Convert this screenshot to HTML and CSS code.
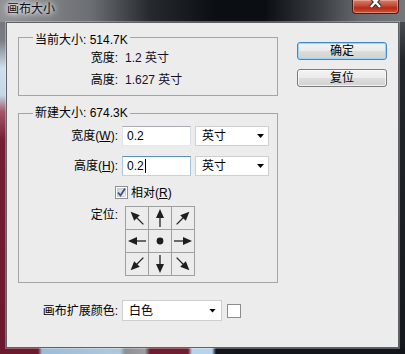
FILE: index.html
```html
<!DOCTYPE html>
<html lang="zh-CN">
<head>
    <meta charset="UTF-8">
    <meta name="viewport" content="width=device-width, initial-scale=1.0">
    <title>画布大小</title>
    <link rel="stylesheet" href="styles.css">
</head>
<body>
    <div class="window">
        <!-- TITLE BAR -->
        <header class="titlebar">
            <span class="titlebar__text">画布大小</span>
            <button class="titlebar__close" aria-label="关闭">
                <svg width="45" height="13" viewBox="0 0 45 13">
                    <path class="titlebar__x-outline" d="M18,-3 L27,7 M27,-3 L18,7"/>
                    <path class="titlebar__x" d="M18,-3 L27,7 M27,-3 L18,7"/>
                </svg>
            </button>
        </header>

        <div class="client">
            <div class="form">

                <!-- CURRENT SIZE -->
                <section class="group group--current">
                    <div class="group__title">当前大小: 514.7K</div>
                    <div class="info">
                        <span class="label">宽度:</span>
                        <span class="info__value">1.2 英寸</span>
                    </div>
                    <div class="info">
                        <span class="label">高度:</span>
                        <span class="info__value">1.627 英寸</span>
                    </div>
                </section>

                <!-- NEW SIZE -->
                <section class="group group--new">
                    <div class="group__title">新建大小: 674.3K</div>
                    <div class="field">
                        <span class="label">宽度(<u>W</u>):</span>
                        <span class="textbox">0.2</span>
                        <span class="combo combo--unit">英寸<span class="combo__arrow"></span></span>
                    </div>
                    <div class="field field--second">
                        <span class="label">高度(<u>H</u>):</span>
                        <span class="textbox textbox--focus">0.2<span class="caret"></span></span>
                        <span class="combo combo--unit">英寸<span class="combo__arrow"></span></span>
                    </div>
                    <label class="check">
                        <svg class="check__box" width="13" height="13" viewBox="0 0 13 13">
                            <defs>
                                <linearGradient id="boxfill" x1="0" y1="0" x2="1" y2="1">
                                    <stop offset="0" stop-color="#cbcfd5"/>
                                    <stop offset="1" stop-color="#f6f6f6"/>
                                </linearGradient>
                            </defs>
                            <rect x="0.5" y="0.5" width="12" height="12" fill="#fff" stroke="#8e8f8f"/>
                            <rect x="2.5" y="2.5" width="8" height="8" fill="url(#boxfill)" stroke="#b5b8bd" stroke-width="0.6"/>
                            <path d="M3,6.5 L5.5,9.5 L10,2.5" fill="none" stroke="#3b4f8c" stroke-width="1.8"/>
                        </svg>
                        <span>相对(<u>R</u>)</span>
                    </label>
                    <div class="anchor-row">
                        <span class="label label--top">定位:</span>
                        <div class="anchor">
                            <span class="anchor__cell"><svg viewBox="0 0 22 22"><g transform="rotate(-135 11 11)"><line x1="2" y1="11" x2="12" y2="11"/><polygon points="11,7 20,11 11,15"/></g></svg></span>
                            <span class="anchor__cell"><svg viewBox="0 0 22 22"><g transform="rotate(-90 11 11)"><line x1="2" y1="11" x2="12" y2="11"/><polygon points="11,7 20,11 11,15"/></g></svg></span>
                            <span class="anchor__cell"><svg viewBox="0 0 22 22"><g transform="rotate(-45 11 11)"><line x1="2" y1="11" x2="12" y2="11"/><polygon points="11,7 20,11 11,15"/></g></svg></span>
                            <span class="anchor__cell"><svg viewBox="0 0 22 22"><g transform="rotate(180 11 11)"><line x1="2" y1="11" x2="12" y2="11"/><polygon points="11,7 20,11 11,15"/></g></svg></span>
                            <span class="anchor__cell"><svg viewBox="0 0 22 22"><circle cx="11" cy="11" r="3.4"/></svg></span>
                            <span class="anchor__cell"><svg viewBox="0 0 22 22"><g><line x1="2" y1="11" x2="12" y2="11"/><polygon points="11,7 20,11 11,15"/></g></svg></span>
                            <span class="anchor__cell"><svg viewBox="0 0 22 22"><g transform="rotate(135 11 11)"><line x1="2" y1="11" x2="12" y2="11"/><polygon points="11,7 20,11 11,15"/></g></svg></span>
                            <span class="anchor__cell"><svg viewBox="0 0 22 22"><g transform="rotate(90 11 11)"><line x1="2" y1="11" x2="12" y2="11"/><polygon points="11,7 20,11 11,15"/></g></svg></span>
                            <span class="anchor__cell"><svg viewBox="0 0 22 22"><g transform="rotate(45 11 11)"><line x1="2" y1="11" x2="12" y2="11"/><polygon points="11,7 20,11 11,15"/></g></svg></span>
                        </div>
                    </div>
                </section>

                <!-- EXTENSION COLOUR -->
                <div class="fill">
                    <span class="label label--wide">画布扩展颜色:</span>
                    <span class="combo combo--color">白色<span class="combo__arrow"></span></span>
                    <span class="swatch"></span>
                </div>
            </div>

            <!-- BUTTONS -->
            <div class="actions">
                <button class="btn btn--default">确定</button>
                <button class="btn">复位</button>
            </div>
        </div>
    </div>
</body>
</html>
```

FILE: styles.css
```css
:root {
    --client-bg: #ececec;
    --group-line: #a5a5a5;
    --text: #000;
}

html, body {
    margin: 0;
    overflow: hidden;
}

body {
    font-family: "Liberation Sans", "Noto Sans CJK SC", sans-serif;
    font-size: 12px;
    line-height: 14px;
    color: var(--text);
}

/* aero frame */
.window {
    width: 405px;
    height: 354px;
    box-sizing: border-box;
    padding: 0 6px 6px;
    display: flex;
    flex-direction: column;
    background:
        linear-gradient(90deg, #8e9094 0, #6c6f73 90px, #26292e 150px, #0b0e13 215px, #0b0e13 265px, #3a3d42 320px, #66696e 360px, #75787c 100%) top / 100% 22px no-repeat,
        linear-gradient(180deg, #6e7074 0, #7a7d81 40px, #cfdfec 68px, #c4d8e6 95px, #a25668 112px, #741f33 140px, #6a1a2c 100%) left / 6px 100% no-repeat,
        linear-gradient(90deg, #6a1a2c 0, #6a1a2c 38px, #9cbcd8 42px, #b0c8dc 120px, #8c8f94 125px, #9c9ea2 145px, #6e1e30 150px, #6e1e30 188px, #b8d4ec 192px, #b8d4ec 212px, #12151a 216px, #12151a 100%) bottom / 100% 6px no-repeat,
        linear-gradient(180deg, #5e6166 0, #23262b 60px, #15181d 100%);
}

.titlebar {
    height: 22px;
    flex: none;
    display: flex;
    justify-content: space-between;
    align-items: flex-start;
}
.titlebar__text {
    margin: 2px 0 0 1px;
    color: #10101a;
    text-shadow: 0 0 4px #fff, 0 0 8px #fff, 0 0 14px rgba(255, 255, 255, 0.8);
}
.titlebar__close {
    width: 47px;
    height: 14px;
    padding: 0;
    border: 1px solid #4a1b16;
    border-top: 0;
    border-radius: 0 0 4px 4px;
    background: linear-gradient(#d0806e, #c24a34 45%, #b82a14 60%, #c8553a);
    box-shadow: inset 0 0 0 1px rgba(255, 200, 190, 0.45);
}
.titlebar__close svg {
    display: block;
}
.titlebar__x-outline {
    fill: none;
    stroke: #3a2a2a;
    stroke-width: 4.5;
}
.titlebar__x {
    fill: none;
    stroke: #fff;
    stroke-width: 2.4;
}

/* client area */
.client {
    flex: 1;
    display: flex;
    gap: 19px;
    padding: 14px 11px 0;
    background: var(--client-bg);
    border: 1px solid #5f6266;
    box-shadow: 0 0 0 1px rgba(255, 255, 255, 0.3);
}

.form {
    width: 260px;
}

.label {
    width: 99px;
    flex: none;
    text-align: right;
}
.label--top {
    align-self: flex-start;
    margin-top: 2px;
}
.label--wide {
    width: 100px;
}

/* group boxes */
.group {
    border: 1px solid var(--group-line);
}
.group__title {
    display: table;
    margin: -8px 0 0 14px;
    padding: 0 2px;
    background: var(--client-bg);
}
.group--current {
    padding: 3px 0 4px;
}
.group--new {
    margin-top: 17px;
    padding: 0 0 6px;
}

.info {
    display: flex;
    line-height: 22px;
}
.info__value {
    margin-left: 7px;
    color: #14102a;
}

.field {
    display: flex;
    align-items: center;
    height: 20px;
    margin-top: 6px;
}
.field--second {
    margin-top: 10px;
}

.textbox {
    width: 69px;
    height: 20px;
    box-sizing: border-box;
    margin-left: 4px;
    padding: 0 4px;
    display: flex;
    align-items: center;
    background: #fff;
    border: 1px solid;
    border-color: #abadb3 #dbdfe6 #e3e9ef #e2e3ea;
}
.textbox--focus {
    border-color: #5b8fc4 #a4c5e4 #b7d5ee #a9c7e3;
}
.caret {
    width: 1px;
    height: 14px;
    margin-left: 1px;
    background: #000;
}

.combo {
    height: 20px;
    box-sizing: border-box;
    display: flex;
    align-items: center;
    justify-content: space-between;
    background: #fff;
    border: 1px solid #cfcfcf;
}
.combo--unit {
    width: 74px;
    margin-left: 4px;
    padding: 0 4px 0 6px;
}
.combo--color {
    width: 100px;
    height: 21px;
    margin-left: 4px;
    padding: 0 5px 0 6px;
}
.combo__arrow {
    width: 7px;
    height: 4px;
    background: #000;
    clip-path: polygon(0 0, 100% 0, 50% 100%);
}

.check {
    display: flex;
    align-items: center;
    gap: 3px;
    height: 13px;
    margin-top: 10px;
    padding-left: 96px;
}
.check__box {
    display: block;
}

.anchor-row {
    display: flex;
    margin-top: 7px;
}
.anchor {
    margin-left: 7px;
    display: grid;
    grid-template-columns: repeat(3, 22px);
    grid-auto-rows: 22px;
    gap: 1px;
    padding: 1px;
    background: #a0a0a0;
}
.anchor__cell {
    background: var(--client-bg);
}
.anchor__cell svg {
    display: block;
    width: 22px;
    height: 22px;
}
.anchor__cell line {
    stroke: #222;
    stroke-width: 1.3;
}
.anchor__cell polygon,
.anchor__cell circle {
    fill: #1e1e1e;
}

.fill {
    display: flex;
    align-items: center;
    margin-top: 17px;
}
.swatch {
    width: 14px;
    height: 14px;
    box-sizing: border-box;
    margin-left: 5px;
    background: #fff;
    border: 1px solid #8c8c8c;
}

/* buttons */
.actions {
    width: 90px;
    display: flex;
    flex-direction: column;
    gap: 9px;
    padding-top: 5px;
}
.btn {
    height: 18px;
    padding: 0;
    font: inherit;
    color: var(--text);
    border: 1px solid #7a7a7a;
    border-radius: 3px;
    background: linear-gradient(#f3f3f3 0, #ebebeb 50%, #dddddd 50%, #d1d1d1 100%);
    box-shadow: inset 0 0 0 1px rgba(255, 255, 255, 0.7);
}
.btn--default {
    border-color: #3c8ccd;
    box-shadow: inset 0 0 0 1px #9fd3f2;
}
```
